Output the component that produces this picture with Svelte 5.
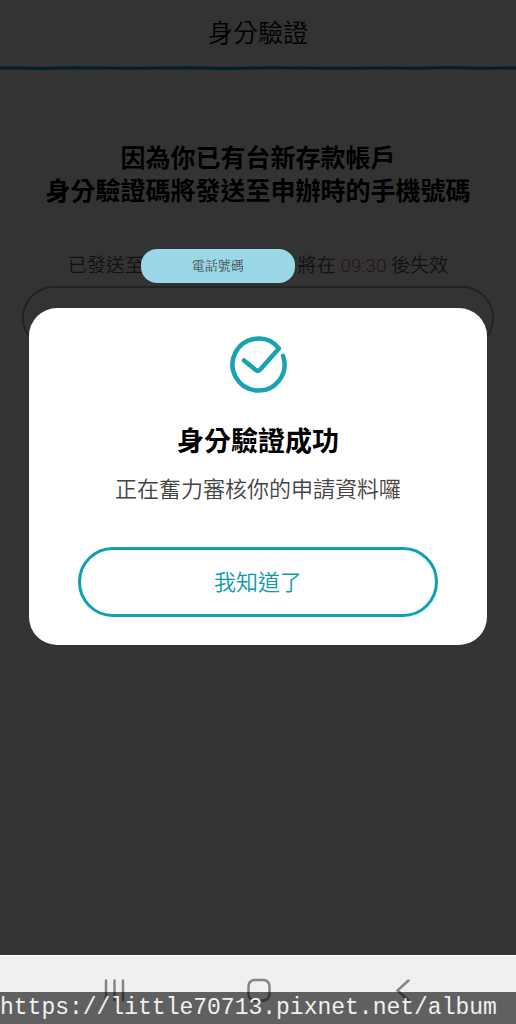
<script>
    const url = 'https://little70713.pixnet.net/album';
    const deadline = '09:30';

    let open = $state(true);
</script>

<div class="phone">
    <div class="screen">
        <header>
            <h1>身分驗證</h1>
        </header>
        <svg class="rule" viewBox="0 0 516 6" preserveAspectRatio="none" aria-hidden="true">
            <path d="M0 3 L22 3 L40 3.4 L76 2.8 L130 3.2 L190 2.8 L222 3.4 L270 2.8 L330 3.3 L390 2.9 L420 3.2 L448 2.6 L480 3.2 L516 3" />
        </svg>

        <main>
            <h2>因為你已有台新存款帳戶<br />身分驗證碼將發送至申辦時的手機號碼</h2>
            <p class="sent">
                <span>已發送至</span>
                <span class="number">電話號碼</span>
                <span>將在 <span class="time">{deadline}</span> 後失效</span>
            </p>
            <input class="code" type="text" inputmode="numeric" aria-label="驗證碼" />
        </main>

        {#if open}
            <div class="overlay">
                <div class="dialog" role="dialog" aria-modal="true" aria-labelledby="dialog-title">
                    <svg class="check" viewBox="0 0 58 58" aria-hidden="true">
                        <path d="M15 24.5 L26.5 33.8 Q29 36 31.5 33.2 L49.9 12.4 A26 26 0 1 0 54 19.8" />
                    </svg>
                    <h3 id="dialog-title">身分驗證成功</h3>
                    <p>正在奮力審核你的申請資料囉</p>
                    <button class="confirm" onclick={() => (open = false)}>我知道了</button>
                </div>
            </div>
        {/if}
    </div>

    <nav>
        <button aria-label="Recent apps">
            <svg viewBox="0 0 24 24"><path d="M3 2.5V22M11.5 2.5V22M20 2.5V22" /></svg>
        </button>
        <button aria-label="Home">
            <svg viewBox="0 0 24 24"><rect x="1.5" y="2" width="21" height="20.5" rx="6" /></svg>
        </button>
        <button aria-label="Back">
            <svg viewBox="0 0 24 24"><path d="M17.5 2.5L6.5 12.5L17.5 22.5" /></svg>
        </button>
        <div class="watermark">{url}</div>
    </nav>
</div>

<style>
    :global(body) {
        margin: 0;
        background: #fff;
    }

    .phone {
        display: flex;
        flex-direction: column;
        min-height: 100vh;
        font-family: Roboto, "Noto Sans CJK TC", sans-serif;
        color: #000;
    }

    h1, h2, h3, p {
        margin: 0;
    }

    .screen {
        position: relative;
        flex: 1;
        display: flex;
        flex-direction: column;
    }

    header {
        padding: 16px 0 14px;
        text-align: center;
    }

    h1 {
        font-size: 25px;
        line-height: 35px;
        font-weight: 350;
    }

    .rule {
        display: block;
        width: 100%;
        height: 6px;
    }

    .rule path {
        fill: none;
        stroke: #00a5b5;
        stroke-width: 3;
    }

    main {
        padding: 71px 22px 0;
        text-align: center;
    }

    h2 {
        margin: 0 -22px;
        font-size: 25px;
        line-height: 33px;
        font-weight: 700;
    }

    .sent {
        display: flex;
        justify-content: center;
        align-items: center;
        margin-top: 41px;
        font-size: 19px;
        line-height: 34px;
        font-weight: 350;
        color: #555;
        white-space: nowrap;
    }

    /* the pill stays bright above the dimmed page */
    .number {
        position: relative;
        z-index: 2;
        width: 154px;
        margin: 0 3px 0 -3px;
        border-radius: 16px;
        background: #9ad8e8;
        color: #333;
        font-family: "Liberation Serif", "Noto Serif CJK TC", "Noto Sans CJK TC", serif;
        font-size: 13px;
    }

    .time {
        color: #d8505e;
        font-weight: 300;
    }

    .code {
        display: block;
        box-sizing: border-box;
        width: 100%;
        height: 64px;
        margin-top: 3px;
        padding: 0 32px;
        border: 2px solid #aaa;
        border-radius: 32px;
        background: #fff;
        font-size: 22px;
    }

    .overlay {
        position: absolute;
        inset: 0;
        z-index: 1;
        display: flex;
        justify-content: center;
        align-items: center;
        padding: 0 29px 2px;
        background: rgba(0, 0, 0, 0.8);
    }

    .dialog {
        flex: 1;
        display: flex;
        flex-direction: column;
        align-items: center;
        padding: 28px 49px;
        border-radius: 28px;
        background: #fff;
        text-align: center;
    }

    .check {
        width: 58px;
        height: 58px;
    }

    .check path {
        fill: none;
        stroke: #17a3b1;
        stroke-width: 4.5;
        stroke-linecap: round;
        stroke-linejoin: round;
    }

    h3 {
        margin-top: 28px;
        font-size: 27px;
        line-height: 40px;
        font-weight: 700;
    }

    .dialog p {
        margin-top: 12px;
        font-size: 22px;
        line-height: 32px;
        font-weight: 350;
        color: #444;
        white-space: nowrap;
    }

    .confirm {
        width: 100%;
        height: 70px;
        margin-top: 41px;
        padding: 0 0 4px;
        border: 3px solid #0ba1b0;
        border-radius: 35px;
        background: #fff;
        color: #0b9aa8;
        font-family: inherit;
        font-size: 22px;
        font-weight: 350;
        cursor: pointer;
    }

    nav {
        position: relative;
        display: flex;
        justify-content: space-between;
        align-items: center;
        height: 68px;
        padding: 0 101px 0 103px;
        border-top: 1px solid #fff;
        background: #f0f0f0;
    }

    nav button {
        display: flex;
        padding: 0;
        border: 0;
        background: none;
    }

    nav svg {
        width: 24px;
        height: 24px;
    }

    nav path,
    nav rect {
        fill: none;
        stroke: #858585;
        stroke-width: 2.5;
        stroke-linecap: round;
    }

    .watermark {
        position: absolute;
        left: 0;
        right: 0;
        bottom: 0;
        background: rgba(0, 0, 0, 0.6);
        color: #f0f0f0;
        font-family: "Courier New", "Liberation Mono", monospace;
        font-size: 23px;
        line-height: 32px;
        white-space: nowrap;
        overflow: hidden;
    }
</style>
